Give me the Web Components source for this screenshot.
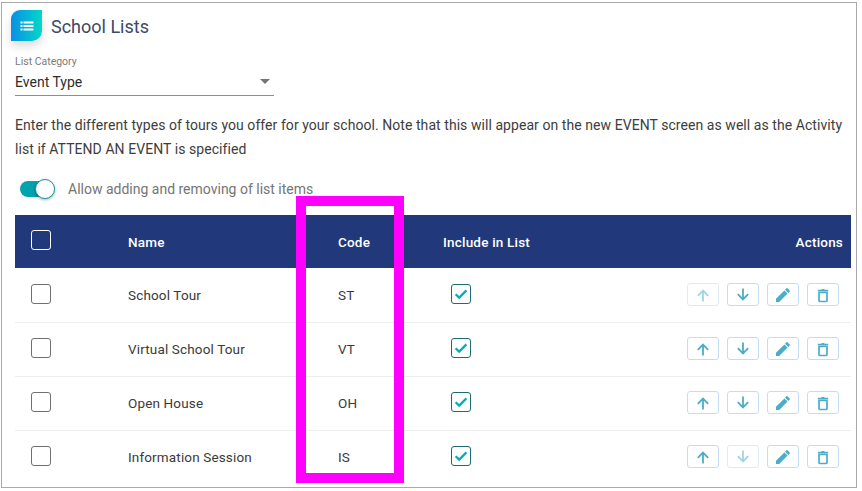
<!DOCTYPE html>
<html>
<head>
<meta charset="utf-8">
<title>School Lists</title>
<style>
html, body { margin: 0; padding: 0; background: #fff; }
body { font-family: Roboto, "Liberation Sans", sans-serif; width: 862px; height: 491px; overflow: hidden; }
</style>
</head>
<body>
<list-page></list-page>
<script>
const icons = {
  up: '<path d="M8 14.5V3.6M2.8 8.8 8 3.6 13.2 8.8" fill="none" stroke="currentColor" stroke-width="1.8"/>',
  down: '<path d="M8 1.5v10.9M2.8 7.2 8 12.4 13.2 7.2" fill="none" stroke="currentColor" stroke-width="1.8"/>',
  edit: '<path d="M1 11.8v3.2h3.2l8.4-8.4-3.2-3.2zM14.7 4.6a.8.8 0 0 0 0-1.1l-2.2-2.2a.8.8 0 0 0-1.1 0L10.1 2.7l3.2 3.2z" fill="currentColor"/>',
  trash: '<path d="M4 5.3h8v8.2a1 1 0 0 1-1 1H5a1 1 0 0 1-1-1z" fill="none" stroke="currentColor" stroke-width="1.7"/><path d="M2.8 2.8h3.4l.7-.8h2.2l.7.8h3.4v1.4H2.8z" fill="currentColor"/>'
};

class PageTitle extends HTMLElement {
  constructor() {
    super();
    this.attachShadow({ mode: 'open' });
    this.shadowRoot.innerHTML = `
      <style>
        :host { display: flex; align-items: center; gap: 9px; height: 31px; }
        .badge {
          width: 31px; height: 31px; display: flex; align-items: center; justify-content: center;
          background: linear-gradient(90deg, #0b8fe4, #00d9c9);
          border-radius: 9px 0 10px 0;
          box-shadow: 0 5px 10px rgba(0,0,0,0.14);
        }
        .text { font-size: 18px; color: #3c4a68; padding-top: 2px; }
      </style>
      <div class="badge">
        <svg width="16" height="16" viewBox="0 0 16 16" fill="#fff">
          <path d="M1.5 3.5h2v2h-2zM1.5 7h2v2h-2zM1.5 10.5h2v2h-2zM4.5 3.5h10v2h-10zM4.5 7h10v2h-10zM4.5 10.5h10v2h-10z"/>
        </svg>
      </div>
      <span class="text"><slot></slot></span>
    `;
  }
}

class SelectField extends HTMLElement {
  constructor() {
    super();
    this.attachShadow({ mode: 'open' });
    this.shadowRoot.innerHTML = `
      <style>
        :host { display: block; width: 259px; }
        .label { font-size: 10.5px; line-height: 12px; color: #7b7b7b; }
        .box {
          display: flex; justify-content: space-between; align-items: center;
          height: 27px; border-bottom: 1px solid #8e8e8e; font-size: 14px; color: #2d2d2d;
        }
        .arrow { width: 0; height: 0; margin-right: 4px; border-left: 5px solid transparent; border-right: 5px solid transparent; border-top: 5px solid #757575; }
      </style>
      <div class="label">${this.getAttribute('label')}</div>
      <div class="box"><span><slot></slot></span><span class="arrow"></span></div>
    `;
  }
}

class ToggleSwitch extends HTMLElement {
  constructor() {
    super();
    this.attachShadow({ mode: 'open' });
    this.shadowRoot.innerHTML = `
      <style>
        :host { display: flex; align-items: center; gap: 14px; height: 22px; padding-left: 5px; font-size: 14px; color: #757575; }
        .track { position: relative; width: 34px; height: 16px; border-radius: 8px; background: #00a3ae; }
        .knob {
          position: absolute; right: -1px; top: -2px; width: 18px; height: 18px; border-radius: 50%;
          background: #fff; border: 1px solid #0a9aa6; box-shadow: 0 1px 3px rgba(0,0,0,0.35);
        }
      </style>
      <span class="track"><span class="knob"></span></span>
      <span><slot></slot></span>
    `;
  }
}

class CheckBox extends HTMLElement {
  constructor() {
    super();
    this.attachShadow({ mode: 'open' });
    const on = this.hasAttribute('checked');
    const light = this.hasAttribute('light');
    const line = on ? '#1d6b73' : light ? '#fff' : '#707070';
    this.shadowRoot.innerHTML = `
      <style>
        :host { display: block; width: 20px; height: 20px; }
        .box { box-sizing: border-box; width: 20px; height: 20px; border: 1px solid ${line}; border-radius: 3px; display: flex; align-items: center; justify-content: center; }
      </style>
      <div class="box">${on ? '<svg width="14" height="14" viewBox="0 0 14 14"><path d="M1.6 7.2 5.2 10.6 12.4 3.4" fill="none" stroke="#00aebb" stroke-width="2.2"/></svg>' : ''}</div>
    `;
  }
}

class IconButton extends HTMLElement {
  constructor() {
    super();
    this.attachShadow({ mode: 'open' });
    const off = this.hasAttribute('disabled');
    this.shadowRoot.innerHTML = `
      <style>
        :host { display: block; }
        .btn {
          box-sizing: border-box; width: 32px; height: 23px; display: flex; align-items: center; justify-content: center;
          border: 1px solid ${off ? '#dcebfa' : '#c3ddf7'}; border-radius: 3px; color: ${off ? '#9fd6e3' : '#4badc6'};
        }
      </style>
      <div class="btn"><svg width="16" height="16" viewBox="0 0 16 16">${icons[this.getAttribute('icon')]}</svg></div>
    `;
  }
}

class ListRow extends HTMLElement {
  constructor() {
    super();
    this.attachShadow({ mode: 'open' });
    const noUp = this.hasAttribute('no-up');
    const noDown = this.hasAttribute('no-down');
    this.shadowRoot.innerHTML = `
      <style>
        :host {
          display: grid; grid-template-columns: 97px 210px 105px 1fr; align-items: center;
          width: 836px; height: 54px; box-sizing: border-box; padding: 0 0 2px 16px;
          border-bottom: 1px solid #eeeeee; font-size: 13.5px; color: #3a3a3a; letter-spacing: 0.15px;
        }
        :host([last]) { border-bottom-color: transparent; }
        check-box { margin-bottom: 2px; }
        .inc { display: flex; justify-content: space-between; align-items: center; padding-left: 8px; }
        .actions { display: flex; justify-content: flex-end; gap: 8px; padding-right: 12px; }
      </style>
      <check-box></check-box>
      <span>${this.getAttribute('name')}</span>
      <span>${this.getAttribute('code')}</span>
      <div class="inc">
        <check-box checked></check-box>
        <div class="actions">
          <icon-button icon="up" ${noUp ? 'disabled' : ''}></icon-button>
          <icon-button icon="down" ${noDown ? 'disabled' : ''}></icon-button>
          <icon-button icon="edit"></icon-button>
          <icon-button icon="trash"></icon-button>
        </div>
      </div>
    `;
  }
}

class ListTable extends HTMLElement {
  constructor() {
    super();
    this.attachShadow({ mode: 'open' });
    this.shadowRoot.innerHTML = `
      <style>
        :host { display: block; width: 836px; }
        .head {
          display: grid; grid-template-columns: 97px 210px 105px 1fr; align-items: center;
          height: 53px; box-sizing: border-box; padding: 0 8px 0 16px; margin-bottom: 1px;
          background: #21387a; color: #fff; font-size: 13.5px; font-weight: 500; letter-spacing: 0.2px;
        }
        .head check-box { margin-bottom: 4px; }
        .head .r { display: flex; justify-content: space-between; }
      </style>
      <div class="head">
        <check-box light></check-box>
        <span>Name</span>
        <span>Code</span>
        <div class="r"><span>Include in List</span><span>Actions</span></div>
      </div>
      <slot></slot>
    `;
  }
}

class ListPage extends HTMLElement {
  constructor() {
    super();
    this.attachShadow({ mode: 'open' });
    this.shadowRoot.innerHTML = `
      <style>
        :host {
          display: block; position: relative; box-sizing: border-box;
          width: 856px; height: 486px; margin: 2px 0 0 1px;
          border: 1px solid #a9a9a9; padding: 7px 0 0 9px; overflow: visible;
        }
        .inner { padding-left: 4px; }
        select-field { margin-top: 15px; }
        p { margin: 17px 0 0; width: 835px; font-size: 14px; line-height: 24px; color: #3d3d3d; letter-spacing: 0.06px; }
        toggle-switch { margin-top: 17px; }
        list-table { margin-top: 15px; }
        .mark { position: absolute; left: 294px; top: 193px; width: 88px; height: 267px; border: 10px solid #ff00ff; pointer-events: none; }
      </style>
      <page-title>School Lists</page-title>
      <div class="inner">
        <select-field label="List Category">Event Type</select-field>
        <p>Enter the different types of tours you offer for your school. Note that this will appear on the new EVENT screen as well as the Activity list if ATTEND AN EVENT is specified</p>
        <toggle-switch>Allow adding and removing of list items</toggle-switch>
        <list-table>
          <list-row name="School Tour" code="ST" no-up></list-row>
          <list-row name="Virtual School Tour" code="VT"></list-row>
          <list-row name="Open House" code="OH"></list-row>
          <list-row name="Information Session" code="IS" no-down last></list-row>
        </list-table>
      </div>
      <div class="mark"></div>
    `;
  }
}

customElements.define('page-title', PageTitle);
customElements.define('select-field', SelectField);
customElements.define('toggle-switch', ToggleSwitch);
customElements.define('check-box', CheckBox);
customElements.define('icon-button', IconButton);
customElements.define('list-row', ListRow);
customElements.define('list-table', ListTable);
customElements.define('list-page', ListPage);
</script>
</body>
</html>
